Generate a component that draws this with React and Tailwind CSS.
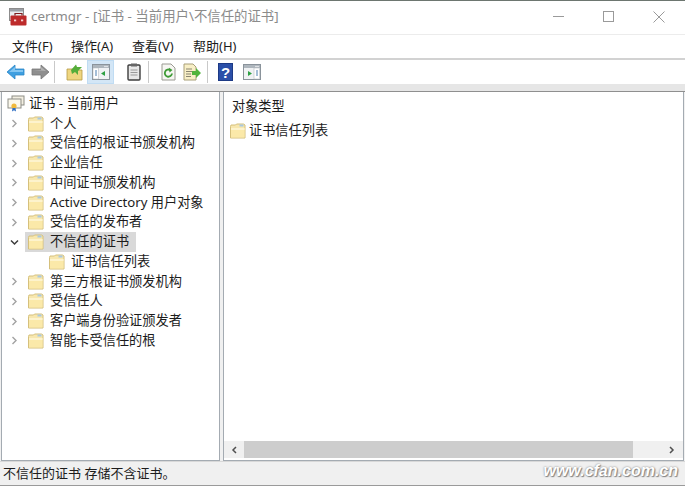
const FONT = "font-['Segoe_UI','Noto_Sans','Noto_Sans_CJK_SC',sans-serif]";

function Folder() {
  return (
    <svg width="16" height="16" viewBox="0 0 16 16" className="shrink-0">
      <path d="M0.5 3.5 L1 2 H5.5 L6.5 1 H13.5 L15 2 V15 H0.5 Z" fill="#f7e7ae" stroke="#d5c07c" strokeWidth="1" />
      <path d="M1 5 H14.5 V14.5 H1 Z" fill="#fbe9a9" />
      <path d="M1 5 H14.5 V7 H1 Z" fill="#fdf3cd" />
      <rect x="9.5" y="1.5" width="4" height="2" fill="#a9c9e2" />
    </svg>
  );
}

function Chevron({ open }) {
  return (
    <svg width="9" height="9" viewBox="0 0 9 9" className="shrink-0">
      {open ? (
        <path d="M1 2.5 L4.5 6 L8 2.5" fill="none" stroke="#3c3c3c" strokeWidth="1.5" />
      ) : (
        <path d="M2.5 1 L6 4.5 L2.5 8" fill="none" stroke="#a2a2a2" strokeWidth="1.4" />
      )}
    </svg>
  );
}

function Row({ label, open, selected }) {
  return (
    <div className="flex items-center h-[19.75px] pl-[8px]">
      <div className="w-[9px] flex items-center"><Chevron open={open} /></div>
      <div className={`flex items-center h-[19.75px] ml-[6px] pl-[3px] pr-[7px] ${selected ? "bg-[#d9d9d9]" : ""}`}>
        <Folder />
        <span className="ml-[6px] whitespace-nowrap">{label}</span>
      </div>
    </div>
  );
}

function Sep() {
  return <div className="w-px h-[22px] bg-[#c9c9c9] shrink-0" />;
}

function ArrowL() {
  return (
    <svg width="19" height="16" viewBox="0 0 19 16">
      <path d="M1 8 L9 1 V5 H18 V11 H9 V15 Z" fill="#3f9fe0" stroke="#2a86c8" strokeWidth="0.8" />
      <path d="M3 8 L9 3 V6 H17 V8 Z" fill="#83c6f2" />
    </svg>
  );
}

function ArrowR() {
  return (
    <svg width="19" height="16" viewBox="0 0 19 16">
      <path d="M18 8 L10 1 V5 H1 V11 H10 V15 Z" fill="#8f8f8f" stroke="#777" strokeWidth="0.8" />
      <path d="M2 6 H10 V3 L15 7 Z" fill="#b3b3b3" />
    </svg>
  );
}

function FolderUp() {
  return (
    <svg width="18" height="18" viewBox="0 0 18 18">
      <path d="M1 6 H7 L8 7 H16 V17 H1 Z" fill="#efd680" stroke="#b59a45" strokeWidth="0.8" />
      <path d="M5 7 L10 1.5 L11 4 H16 L12 8 L12 12 L9 9 L6 11 Z" fill="#55ad3a" />
    </svg>
  );
}

function WinPane({ flip }) {
  return (
    <svg width="18" height="16" viewBox="0 0 18 16">
      <rect x="0.5" y="0.5" width="17" height="15" fill="#f0f2f4" stroke="#8a939b" />
      <rect x="1" y="1" width="16" height="3" fill="#aeb6bd" />
      <circle cx="13" cy="2.5" r="0.7" fill="#fff" /><circle cx="15" cy="2.5" r="0.7" fill="#fff" />
      <rect x={flip ? 11 : 1} y="4" width="5.5" height="11" fill="#fff" stroke="#aab2b9" strokeWidth="0.5" />
      <path d="M3 7 H5 M3 9 H5 M3 11 H5" transform={flip ? "translate(10 0)" : ""} stroke="#4a7fb0" strokeWidth="1" />
      {flip ? (
        <path d="M5 7 L9 9.5 L5 12 Z" fill="#2ea043" />
      ) : (
        <path d="M13 7 L9 9.5 L13 12 Z" fill="#2ea043" />
      )}
    </svg>
  );
}

function Clipboard() {
  return (
    <svg width="14" height="18" viewBox="0 0 14 18">
      <rect x="1" y="2" width="12" height="15" rx="1" fill="#e8e8e8" stroke="#3e3e3e" strokeWidth="1.4" />
      <rect x="4" y="0.5" width="6" height="3" fill="#666" />
      <path d="M3.5 7 H10.5 M3.5 9.5 H10.5 M3.5 12 H10.5" stroke="#9a9a9a" strokeWidth="1" />
    </svg>
  );
}

function Refresh() {
  return (
    <svg width="15" height="18" viewBox="0 0 15 18">
      <path d="M1 1 H10 L14 5 V17 H1 Z" fill="#f6f6f2" stroke="#9a9a92" />
      <path d="M11 10.5 A3.6 3.6 0 1 1 9.5 7.2" fill="none" stroke="#3d9a35" strokeWidth="1.8" />
      <path d="M8 4.8 L11.5 7 L8.5 9.5 Z" fill="#3d9a35" />
    </svg>
  );
}

function Export() {
  return (
    <svg width="19" height="18" viewBox="0 0 19 18">
      <path d="M1 1 H10 L13 4 V17 H1 Z" fill="#f8efc6" stroke="#a89f78" />
      <path d="M3 6 H9 M3 8.5 H9 M3 11 H8 M3 13.5 H8" stroke="#8a8570" strokeWidth="1" />
      <path d="M9 8 H13 V5 L18 10 L13 15 V12 H9 Z" fill="#52b43c" />
    </svg>
  );
}

function Help() {
  return (
    <div className="w-[15px] h-[18px] bg-[#2b4fa8] border border-[#1d3a85] flex items-center justify-center text-white text-[15px] font-bold font-['Liberation_Sans',sans-serif] leading-none">?</div>
  );
}

function AppIcon() {
  return (
    <svg width="18" height="18" viewBox="0 0 18 18" className="shrink-0">
      <rect x="0.5" y="0.5" width="14" height="12" fill="#e9ecef" stroke="#8c8c8c" />
      <rect x="1" y="1" width="13" height="2.5" fill="#9b9fa5" />
      <rect x="1.5" y="7.5" width="16" height="10" rx="1" fill="#bd2b2b" />
      <path d="M6 7.5 V5.5 H13 V7.5" fill="none" stroke="#7f1c1c" strokeWidth="1.2" />
      <rect x="5" y="11.5" width="2.2" height="1.8" fill="#f3d0d0" />
      <rect x="12" y="11.5" width="2.2" height="1.8" fill="#f3d0d0" />
    </svg>
  );
}

function CertIcon() {
  return (
    <svg width="18" height="17" viewBox="0 0 18 17" className="shrink-0">
      <rect x="5" y="1" width="12" height="9" fill="#f3efe2" stroke="#8d8d86" />
      <rect x="1" y="4" width="13" height="9" fill="#fbf8ec" stroke="#8d8d86" />
      <circle cx="7" cy="11" r="2.6" fill="#f0b93c" />
      <path d="M5.5 13 L5 16.5 L7 15.2 L9 16.5 L8.5 13 Z" fill="#2f6fc4" />
    </svg>
  );
}

const items = ["个人", "受信任的根证书颁发机构", "企业信任", "中间证书颁发机构", "Active Directory 用户对象", "受信任的发布者"];
const items2 = ["第三方根证书颁发机构", "受信任人", "客户端身份验证颁发者", "智能卡受信任的根"];

export default function App() {
  return (
    <div className={`relative w-[685px] h-[486px] overflow-hidden bg-white flex flex-col text-[13.2px] text-[#1c1c1c] ${FONT} border-t border-[#6d7670]`}>
      {/* Title bar */}
      <div className="h-[34px] shrink-0 flex items-center pl-[9px] pb-[2px] border-b border-[#ececec]">
        <AppIcon />
        <span className="ml-[4px] text-[13.4px] text-[#8b8b8b] whitespace-nowrap">certmgr - [证书 - 当前用户\不信任的证书]</span>
        <div className="ml-auto flex items-center gap-[39px] pr-[20px]">
          <div className="w-[11px] h-px bg-[#9a9a9a]" />
          <div className="w-[11px] h-[11px] border border-[#9a9a9a]" />
          <svg width="12" height="12" viewBox="0 0 12 12"><path d="M0.5 0.5 L11.5 11.5 M11.5 0.5 L0.5 11.5" stroke="#9a9a9a" strokeWidth="1" /></svg>
        </div>
      </div>
      {/* Menu */}
      <div className="h-[25px] shrink-0 flex items-center pl-[12px] text-[13px] border-b-2 border-[#d2d2d2]">
        <span className="w-[59px]">文件(F)</span>
        <span className="w-[61px]">操作(A)</span>
        <span className="w-[61px]">查看(V)</span>
        <span>帮助(H)</span>
      </div>
      {/* Toolbar */}
      <div className="h-[24px] shrink-0 flex items-center pl-[6px]">
        <ArrowL />
        <div className="w-[6px]" />
        <ArrowR />
        <div className="w-[4px]" />
        <Sep />
        <div className="w-[11px]" />
        <FolderUp />
        <div className="w-[3px]" />
        <div className="w-[27px] h-[24px] bg-[#d3e6f6] border border-[#c0dcf3] flex items-center justify-center"><WinPane /></div>
        <div className="w-[13px]" />
        <Clipboard />
        <div className="w-[7px]" />
        <Sep />
        <div className="w-[12px]" />
        <Refresh />
        <div className="w-[7px]" />
        <Export />
        <div className="w-[5px]" />
        <Sep />
        <div className="w-[10px]" />
        <Help />
        <div className="w-[10px]" />
        <WinPane flip />
      </div>
      {/* Panes */}
      <div className="flex-1 min-h-0 flex flex-col bg-[#f0f0f0]">
        <div className="h-[8px] shrink-0 bg-[#e6e6e6] border-b border-[#8f8f8f]" />
        <div className="flex-1 min-h-0 flex gap-[3px] pl-[1px] pr-[1px]">
          {/* Tree */}
          <div className="w-[219px] shrink-0 bg-white border border-[#a4abb2] border-t-0 pt-[2px]">
            <div className="flex items-center h-[19.75px] pl-[5px]">
              <CertIcon />
              <span className="ml-[4px] whitespace-nowrap">证书 - 当前用户</span>
            </div>
            {items.map((l) => <Row key={l} label={l} />)}
            <Row label="不信任的证书" open selected />
            <div className="flex items-center h-[19.75px] pl-[47px]">
              <Folder />
              <span className="ml-[6px] whitespace-nowrap">证书信任列表</span>
            </div>
            {items2.map((l) => <Row key={l} label={l} />)}
          </div>
          {/* Detail */}
          <div className="flex-1 min-w-0 bg-white border border-[#a4abb2] border-t-0 flex flex-col">
            <div className="flex-1 min-h-0 pl-[8px] pt-[5px]">
              <div className="h-[19px] leading-[19px]">对象类型</div>
              <div className="flex items-center h-[19px] mt-[5px] -ml-[2px]">
                <Folder />
                <span className="ml-[3px] whitespace-nowrap">证书信任列表</span>
              </div>
            </div>
            <div className="h-[17px] mb-[2px] shrink-0 bg-[#f0f0f0] flex items-center">
              <div className="w-[20px] flex items-center justify-center">
                <svg width="7" height="8" viewBox="0 0 7 8"><path d="M5 1 L2 4 L5 7" fill="none" stroke="#505050" strokeWidth="1.5" /></svg>
              </div>
              <div className="w-[389px] h-full bg-[#cdcdcd]" />
              <div className="flex-1 flex items-center justify-end pr-[8px]">
                <svg width="7" height="8" viewBox="0 0 7 8"><path d="M2 1 L5 4 L2 7" fill="none" stroke="#505050" strokeWidth="1.5" /></svg>
              </div>
            </div>
          </div>
        </div>
      </div>
      {/* Status */}
      <div className="h-[25px] shrink-0 bg-[#f0f0f0] flex items-center pl-[3px] pt-[1px] text-[13px] border-t border-[#d8d8d8] border-b border-b-[#9a9a9a]">
        不信任的证书 存储不含证书。
      </div>
      {/* Watermark */}
      <div className="absolute right-[7px] bottom-[7px] text-[16px] leading-none font-bold italic text-white font-['Liberation_Sans',sans-serif] [text-shadow:0_0_2px_#777,1px_1px_1px_#888]">
        www.cfan.com.cn
      </div>
    </div>
  );
}
